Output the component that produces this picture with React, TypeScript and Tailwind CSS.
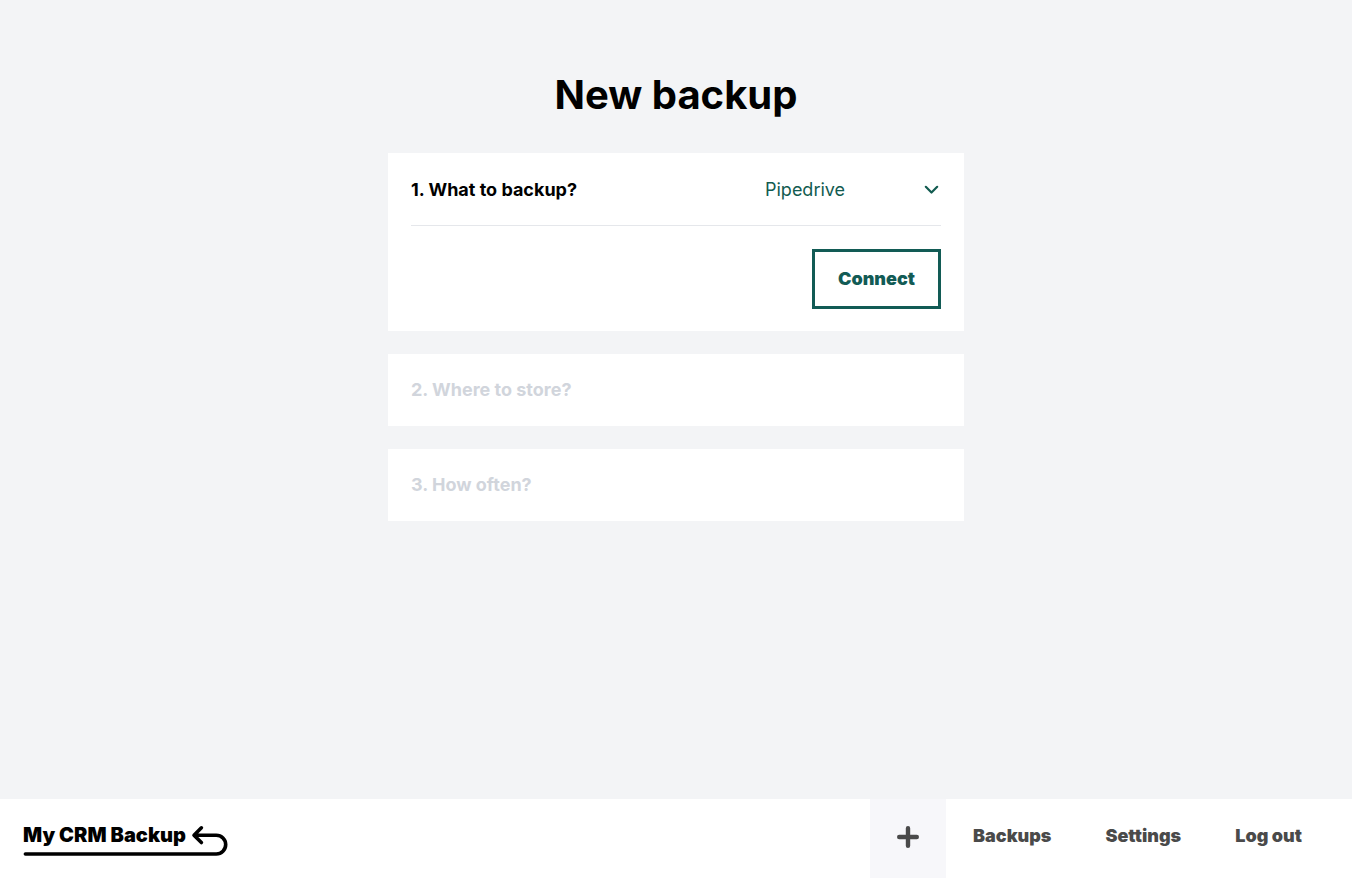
const Logo = () => {
    return (
        <a href="#" className="relative block w-[206px] h-[34px]" aria-label="My CRM Backup">
            <span className="block pt-px text-xl leading-6 font-black text-black whitespace-nowrap">My CRM Backup</span>
            <svg className="absolute inset-0 w-full h-full" viewBox="0 0 206 34" fill="none" stroke="black" strokeWidth="3.6" strokeLinecap="round" strokeLinejoin="round">
                <path d="M2.4 32H193.3A9.4 9.4 0 0 0 193.3 13.2H171.5M178.4 5.8L171 13.2L178.4 20.6" />
            </svg>
        </a>
    )
}

const NavLink = ({ label }: { label: string }) => {
    return (
        <li>
            <a href="#" className="flex h-full items-center px-[27px] pb-1.5 text-lg font-black text-[#4a4a4a]">{label}</a>
        </li>
    )
}

const LockedStep = ({ title }: { title: string }) => {
    return (
        <section className="bg-white px-[23px] h-[72px] flex items-center">
            <h2 className="text-lg font-bold text-gray-300">{title}</h2>
        </section>
    )
}

const App = () => {
    return (
        <div className="flex flex-col min-h-screen bg-gray-100 font-['Inter',sans-serif] text-black">
            <main className="flex-1 w-full max-w-xl mx-auto pt-[69px] pb-12">
                <h1 className="text-[40px] leading-[52px] font-bold text-center">New backup</h1>

                <div className="flex flex-col gap-[23px] mt-8">
                    <section className="bg-white px-[23px] pb-[22px]">
                        <div className="flex h-[73px] pt-px items-center justify-between border-b border-gray-200">
                            <label htmlFor="source" className="text-lg font-bold">1. What to backup?</label>
                            <div className="relative w-44">
                                <select id="source" className="w-full appearance-none bg-transparent text-lg font-normal text-[#125b50] outline-none">
                                    <option>Pipedrive</option>
                                </select>
                                <svg className="pointer-events-none absolute right-0.5 inset-y-0 my-auto w-4 h-4" viewBox="0 0 16 16" fill="none" stroke="#125b50" strokeWidth="2.2" strokeLinecap="round" strokeLinejoin="round">
                                    <path d="M2.8 4.8L8.5 10.5L14.2 4.8" />
                                </svg>
                            </div>
                        </div>
                        <div className="flex justify-end pt-[23px]">
                            <button type="button" className="h-[60px] border-3 border-[#125b55] px-[23px] text-lg font-black text-[#125b55] cursor-pointer">Connect</button>
                        </div>
                    </section>

                    <LockedStep title="2. Where to store?" />
                    <LockedStep title="3. How often?" />
                </div>
            </main>

            <footer className="sticky bottom-0 flex h-[79px] items-center justify-between bg-white px-[23px]">
                <Logo />
                <nav className="h-full">
                    <ul className="flex h-full">
                        <li>
                            <a href="#" aria-label="New backup" className="flex h-full w-[76px] items-center justify-center bg-[#f7f7fa] pb-1 text-[#4a4a4a]">
                                <svg className="w-6 h-6" viewBox="0 0 24 24" fill="none" stroke="currentColor" strokeWidth="4.4" strokeLinecap="round">
                                    <path d="M12 3.2V20.8M3.2 12H20.8" />
                                </svg>
                            </a>
                        </li>
                        <NavLink label="Backups" />
                        <NavLink label="Settings" />
                        <NavLink label="Log out" />
                    </ul>
                </nav>
            </footer>
        </div>
    )
}

export default App
